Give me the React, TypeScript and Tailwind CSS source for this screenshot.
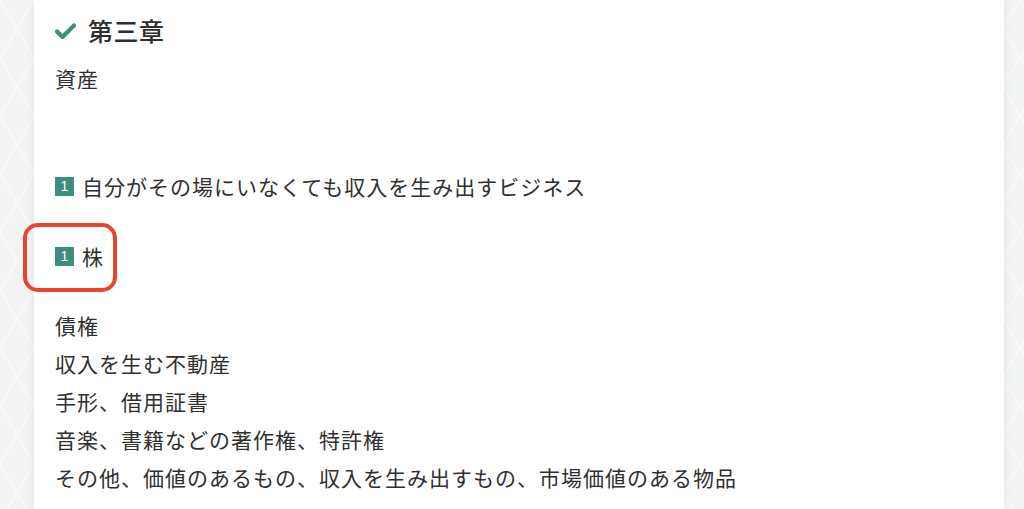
import React from "react";

const Badge = () => (
  <span className="shrink-0 inline-flex items-center justify-center min-w-[19px] w-[19px] h-[19px] bg-[#3d8e7f] text-white text-[14px] font-normal leading-none mr-[8px] font-['Liberation_Sans',sans-serif] tracking-normal">
    1
  </span>
);

export default function App() {
  const lines = [
    "債権",
    "収入を生む不動産",
    "手形、借用証書",
    "音楽、書籍などの著作権、特許権",
    "その他、価値のあるもの、収入を生み出すもの、市場価値のある物品",
  ];
  return (
    <div
      className="w-[1024px] h-[509px] overflow-hidden bg-[#f2f3f3] flex font-['Noto_Sans_CJK_JP','Noto_Sans',sans-serif] text-[#2f2f2f]"
      style={{
        backgroundImage:
          "linear-gradient(60deg, transparent 48%, rgba(255,255,255,0.45) 49%, rgba(255,255,255,0.45) 51%, transparent 52%), linear-gradient(-60deg, transparent 48%, rgba(255,255,255,0.45) 49%, rgba(255,255,255,0.45) 51%, transparent 52%)",
        backgroundSize: "34px 58px",
      }}
    >
      <div className="ml-[34px] w-[970px] h-full bg-white shadow-[0_0_10px_rgba(0,0,0,0.07)] pl-[21px] flex flex-col tracking-[1px]">
        <h2 className="mt-[13px] h-[36px] flex items-center text-[25px] font-medium tracking-[0.5px]">
          <svg width="21" height="16" viewBox="0 0 21 16" className="mr-[12px] shrink-0">
            <path d="M2 8.5 L7.5 14 L19 2.5" fill="none" stroke="#3d8e7f" strokeWidth="4.2" strokeLinecap="round" strokeLinejoin="round" />
          </svg>
          第三章
        </h2>
        <p className="mt-[10px] text-[21px] leading-[38px]">資産</p>
        <p className="mt-[70px] text-[21px] leading-[38px] flex items-center">
          <Badge />
          <span>自分がその場にいなくても収入を生み出すビジネス</span>
        </p>
        <div className="mt-[32px] relative">
          <p className="text-[21px] leading-[38px] flex items-center">
            <Badge />
            <span>株</span>
          </p>
          <div className="absolute left-[-32px] top-[-14px] w-[94px] h-[69px] border-[4px] border-[#e8462c] rounded-[15px]" />
        </div>
        <div className="mt-[31px] flex flex-col">
          {lines.map((l) => (
            <p key={l} className="text-[21px] leading-[38px]">
              {l}
            </p>
          ))}
        </div>
      </div>
    </div>
  );
}
